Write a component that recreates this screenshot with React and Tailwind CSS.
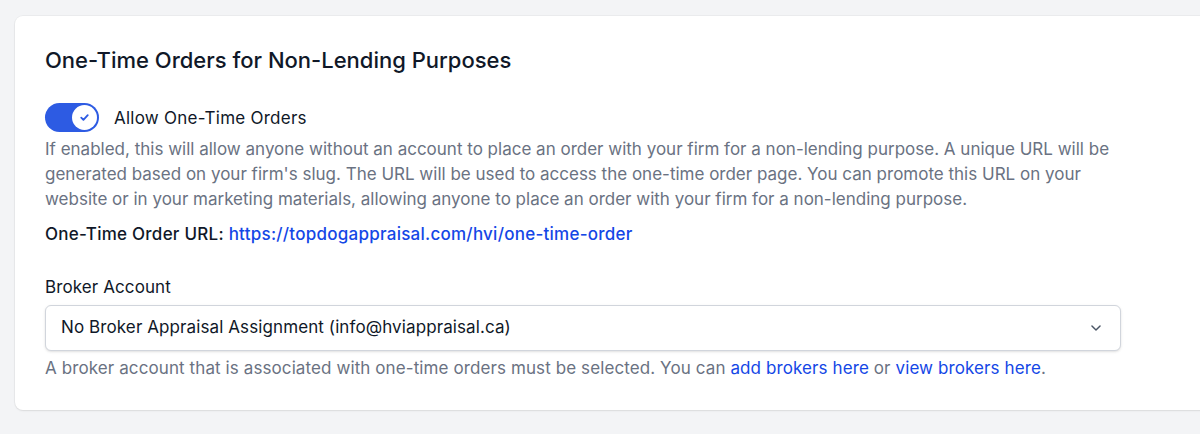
import React, { useState } from "react"

const Toggle = ({ on, onChange }) => (
  <button
    type="button"
    onClick={() => onChange(!on)}
    className={`relative inline-flex h-[29px] w-[54px] shrink-0 items-center rounded-full p-[2px] ${
      on ? "bg-[#2d5be3]" : "bg-gray-200"
    }`}
  >
    <span
      className={`flex h-[25px] w-[25px] items-center justify-center rounded-full bg-white transition-transform ${
        on ? "translate-x-[25px]" : "translate-x-0"
      }`}
    >
      {on && (
        <svg viewBox="0 0 12 12" className="h-[13px] w-[13px]" fill="none">
          <path
            d="M3 6.2l2 2 4-4.4"
            stroke="#2d5be3"
            strokeWidth="1.7"
            strokeLinecap="round"
            strokeLinejoin="round"
          />
        </svg>
      )}
    </span>
  </button>
)

export default function App() {
  const [allow, setAllow] = useState(true)
  const [broker, setBroker] = useState("none")

  return (
    <div
      className="min-h-screen overflow-hidden bg-[#f3f4f6] pt-[16px]"
      style={{ fontFamily: "Inter, 'Noto Sans', sans-serif" }}
    >
      <div className="ml-[15px] w-[1220px] rounded-lg bg-white px-[30px] py-[30px] shadow-[0_1px_2px_rgba(0,0,0,0.08),0_0_0_1px_rgba(0,0,0,0.03)]">
        <div className="w-[1076px] text-[17px] tracking-[0.1px]">
          {/* Heading */}
          <h2 className="text-[22px] leading-[28px] font-medium tracking-normal text-gray-900">
            One-Time Orders for Non-Lending Purposes
          </h2>

          {/* Toggle */}
          <div className="mt-[29px] flex items-center gap-[15px]">
            <Toggle on={allow} onChange={setAllow} />
            <span className="leading-[24px] tracking-[0.25px] text-gray-900">
              Allow One-Time Orders
            </span>
          </div>
          <p className="mt-[5px] leading-[25px] tracking-normal text-gray-500">
            If enabled, this will allow anyone without an account to place an
            order with your firm for a non-lending purpose. A unique URL will be
            generated based on your firm's slug. The URL will be used to access
            the one-time order page. You can promote this URL on your website or
            in your marketing materials, allowing anyone to place an order with
            your firm for a non-lending purpose.
          </p>
          <p className="mt-[10px] leading-[24px] font-medium tracking-[0.25px] text-gray-900">
            One-Time Order URL:{" "}
            <a href="#" className="text-blue-700">
              https://topdogappraisal.com/hvi/one-time-order
            </a>
          </p>

          {/* Broker select */}
          <label className="mt-[29px] block leading-[24px] text-gray-900">
            Broker Account
          </label>
          <div className="relative mt-[6px] w-[1076px]">
            <select
              value={broker}
              onChange={(e) => setBroker(e.target.value)}
              className="h-[46px] w-full appearance-none rounded-md border border-gray-300 bg-white pr-10 pl-[15px] text-[17px] tracking-[0.1px] text-gray-900 shadow-sm outline-none"
            >
              <option value="none">
                No Broker Appraisal Assignment (info@hviappraisal.ca)
              </option>
            </select>
            <svg
              viewBox="0 0 20 20"
              className="pointer-events-none absolute top-1/2 right-[16px] h-[18px] w-[18px] -translate-y-1/2 text-gray-600"
              fill="none"
            >
              <path
                d="M5.5 7.75l4.5 4.5 4.5-4.5"
                stroke="currentColor"
                strokeWidth="1.6"
                strokeLinecap="round"
                strokeLinejoin="round"
              />
            </svg>
          </div>
          <p className="mt-[5px] leading-[24px] text-gray-500">
            A broker account that is associated with one-time orders must be
            selected. You can{" "}
            <a href="#" className="text-blue-700">
              add brokers here
            </a>{" "}
            or{" "}
            <a href="#" className="text-blue-700">
              view brokers here
            </a>
            .
          </p>
        </div>
      </div>
    </div>
  )
}
